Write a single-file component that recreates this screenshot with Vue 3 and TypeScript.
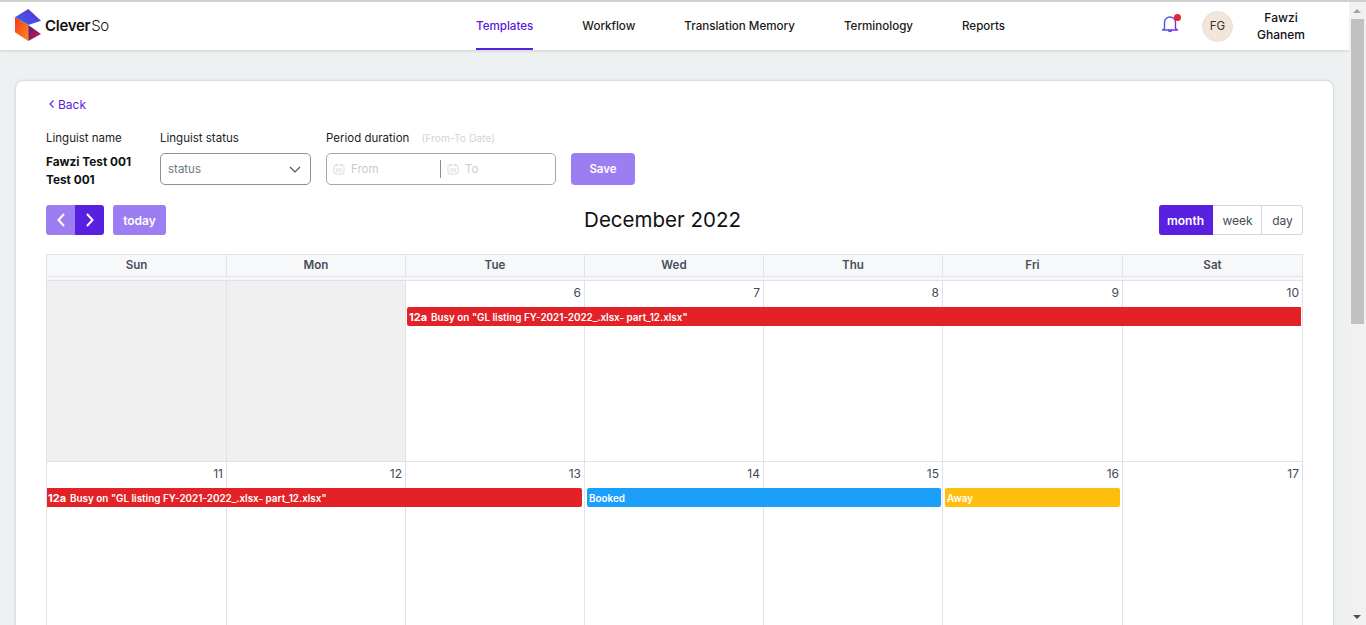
<script setup lang="ts">
interface Ev { label: string; time?: string; start: number; span: number; kind: string; contStart?: boolean; contEnd?: boolean }
interface Week { days: (number | null)[]; events: Ev[] }

const navItems = [
  { label: 'Templates', active: true },
  { label: 'Workflow', active: false },
  { label: 'Translation Memory', active: false },
  { label: 'Terminology', active: false },
  { label: 'Reports', active: false },
]
const dayNames = ['Sun', 'Mon', 'Tue', 'Wed', 'Thu', 'Fri', 'Sat']
const file = 'Busy on "GL listing FY-2021-2022_.xlsx- part_12.xlsx"'
const weeks: Week[] = [
  {
    days: [null, null, 6, 7, 8, 9, 10],
    events: [{ time: '12a', label: file, start: 3, span: 5, kind: 'busy', contEnd: true }],
  },
  {
    days: [11, 12, 13, 14, 15, 16, 17],
    events: [
      { time: '12a', label: file, start: 1, span: 3, kind: 'busy', contStart: true },
      { label: 'Booked', start: 4, span: 2, kind: 'booked' },
      { label: 'Away', start: 6, span: 1, kind: 'away' },
    ],
  },
]
function evStyle(e: Ev) {
  return { gridColumn: `${e.start} / span ${e.span}` }
}
</script>

<template>
  <div class="app">
    <div class="page">
      <header class="topbar">
        <div class="brand">
          <svg class="logo" viewBox="0 0 26 32" width="26" height="32">
            <defs>
              <linearGradient id="lgTop" x1="0" y1="1" x2="1" y2="0">
                <stop offset="0" stop-color="#2f6fe8" />
                <stop offset="1" stop-color="#6a1fd8" />
              </linearGradient>
              <linearGradient id="lgLeft" x1="0" y1="0" x2="1" y2="1">
                <stop offset="0" stop-color="#f2371f" />
                <stop offset="1" stop-color="#ff8a1c" />
              </linearGradient>
              <linearGradient id="lgRight" x1="0" y1="0" x2="1" y2="1">
                <stop offset="0" stop-color="#5a1a78" />
                <stop offset="1" stop-color="#d01c3c" />
              </linearGradient>
            </defs>
            <path d="M0 8.3 L13.3 0 L26 11.7 L13.3 16 Z" fill="url(#lgTop)" />
            <path d="M0 8.3 L13.3 16 L13.3 32 L0 23.3 Z" fill="url(#lgLeft)" />
            <path d="M13.3 16 L26 25 L13.3 32 Z" fill="url(#lgRight)" />
          </svg>
          <span class="brand-name"><b>Clever</b><span>So</span></span>
        </div>
        <nav class="nav">
          <a v-for="n in navItems" :key="n.label" class="nav-item" :class="{ active: n.active }">{{ n.label }}</a>
        </nav>
        <div class="user">
          <span class="bell">
            <svg viewBox="0 1.5 20 20" width="20" height="20" fill="none" stroke="url(#bellGrad)" stroke-width="1.4" stroke-linecap="round" stroke-linejoin="round">
              <defs>
                <linearGradient id="bellGrad" gradientUnits="userSpaceOnUse" x1="2" y1="0" x2="18" y2="0">
                  <stop offset="0" stop-color="#4a5cf0" />
                  <stop offset="1" stop-color="#8a24e0" />
                </linearGradient>
              </defs>
              <path d="M4.5 14 V7.5 a5.5 5 0 0 1 11 0 V14 l2 1.5 H2.5 Z" />
              <path d="M8.5 15.5 a1.5 1.5 0 0 0 3 0" />
            </svg>
            <i class="bell-dot"></i>
          </span>
          <span class="avatar">FG</span>
          <span class="user-name">Fawzi<br />Ghanem</span>
        </div>
      </header>

      <main class="content">
        <section class="card">
          <a class="back">
            <svg viewBox="0 0 6 10" width="6" height="10" fill="none" stroke="#5a20e0" stroke-width="1.1"><path d="M4.5 1.5 L1 5 L4.5 8.5" /></svg>
            Back
          </a>

          <div class="filters">
            <div class="f-name">
              <label>Linguist name</label>
              <div class="name-value">Fawzi Test 001 Test 001</div>
            </div>
            <div class="f-status">
              <label>Linguist status</label>
              <div class="select">
                <span>status</span>
                <svg viewBox="0 0 12 7" width="12" height="7" fill="none" stroke="#555" stroke-width="1.2"><path d="M1 1 L6 6 L11 1" /></svg>
              </div>
            </div>
            <div class="f-period">
              <label>Period duration <small>(From-To Date)</small></label>
              <div class="range">
                <div class="range-part from">
                  <svg viewBox="0 0 12 12" width="12" height="12" fill="none" stroke="#d5dadd" stroke-width="1"><rect x="1" y="2" width="10" height="9" rx="2" /><path d="M3.5 1 V3 M8.5 1 V3 M3 6 H9 M3 8 H9" /></svg>
                  <span>From</span>
                </div>
                <div class="range-part">
                  <svg viewBox="0 0 12 12" width="12" height="12" fill="none" stroke="#d5dadd" stroke-width="1"><rect x="1" y="2" width="10" height="9" rx="2" /><path d="M3.5 1 V3 M8.5 1 V3 M3 6 H9 M3 8 H9" /></svg>
                  <span>To</span>
                </div>
              </div>
            </div>
            <button class="save">Save</button>
          </div>

          <div class="toolbar">
            <div class="tb-left">
              <div class="btn-group">
                <button class="arrow light">
                  <svg viewBox="0 0 8 14" width="8" height="14" fill="none" stroke="#fff" stroke-width="2"><path d="M7 1 L1.5 7 L7 13" /></svg>
                </button>
                <button class="arrow dark">
                  <svg viewBox="0 0 8 14" width="8" height="14" fill="none" stroke="#fff" stroke-width="2"><path d="M1 1 L6.5 7 L1 13" /></svg>
                </button>
              </div>
              <button class="today">today</button>
            </div>
            <h2 class="title">December 2022</h2>
            <div class="views">
              <button class="view on">month</button>
              <button class="view wk">week</button>
              <button class="view dy">day</button>
            </div>
          </div>

          <div class="calendar">
            <div class="cal-head">
              <div v-for="d in dayNames" :key="d" class="head-cell">{{ d }}</div>
            </div>
            <div class="spacer"></div>
            <div v-for="(w, i) in weeks" :key="i" class="week">
              <div class="week-bg">
                <div v-for="(d, j) in w.days" :key="j" class="bg-cell" :class="{ off: d === null }"></div>
              </div>
              <div class="week-nums">
                <div v-for="(d, j) in w.days" :key="j" class="num">{{ d }}</div>
              </div>
              <div class="week-events">
                <div
                  v-for="e in w.events"
                  :key="e.start"
                  class="event"
                  :class="[e.kind, { 'cont-start': e.contStart, 'cont-end': e.contEnd }]"
                  :style="evStyle(e)"
                >
                  <b v-if="e.time">{{ e.time }}</b>
                  <span>{{ e.label }}</span>
                </div>
              </div>
            </div>
          </div>
        </section>
      </main>
    </div>

    <aside class="scrollbar">
      <i class="sb-up"></i>
      <div class="sb-thumb"></div>
      <i class="sb-down"></i>
    </aside>
  </div>
</template>

<style>
html, body { margin: 0; height: 100%; overflow: hidden; }
</style>

<style scoped>
* { box-sizing: border-box; }
.app {
  display: flex;
  width: 1366px;
  height: 625px;
  overflow: hidden;
  font-family: Inter, "Open Sans", sans-serif;
  color: #111;
  background: #eef1f2;
  border-top: 2px solid #cfcfcf;
}
.page { flex: 1; min-width: 0; }

.topbar {
  position: relative;
  height: 48px;
  background: #fff;
  box-shadow: 0 1px 3px rgba(0, 0, 0, .14);
  display: flex;
  align-items: stretch;
}
.brand { width: 476px; display: flex; align-items: center; padding: 0 0 2px 15px; gap: 4px; }
.brand-name { font-size: 15px; letter-spacing: -.3px; color: #111; }
.brand-name b { font-weight: 600; }
.brand-name span { font-weight: 300; margin-left: 1px; }
.nav { display: flex; gap: 49px; flex: 1; }
.nav-item {
  display: flex;
  align-items: center;
  height: 48px;
  padding-top: 2px;
  font-size: 11.6px;
  font-weight: 500;
  color: #1a1a1a;
  border-bottom: 2px solid transparent;
}
.nav-item.active { color: #5a20e0; border-bottom-color: #5a20e0; }
.user { display: flex; align-items: center; width: 189px; }
.bell { position: relative; width: 20px; height: 20px; }
.bell-dot {
  position: absolute; right: -1px; top: -2px;
  width: 7px; height: 7px; border-radius: 50%;
  background: #e0282e;
}
.avatar {
  width: 31px; height: 31px; margin-left: 22px;
  border-radius: 50%;
  background: #f2e6da;
  border: 1px solid #e6e2de;
  display: flex; align-items: center; justify-content: center;
  font-size: 11.5px; color: #333;
}
.user-name {
  width: 72px; margin-left: 12px;
  text-align: center;
  font-size: 12px; line-height: 17px; font-weight: 500; color: #111;
}

.content { padding: 31px 16px 0; }
.card {
  background: #fff;
  border-radius: 7px 7px 0 0;
  box-shadow: 0 0 3px rgba(0, 0, 0, .22);
  padding: 15px 30px 0;
  height: 560px;
  overflow: hidden;
}
.back {
  display: flex; align-items: center; gap: 3px;
  margin-left: 3px;
  height: 16px;
  font-size: 12px; color: #5a20e0;
}
.filters { display: flex; margin-top: 18px; height: 64px; }
label {
  display: block;
  height: 16px;
  font-size: 11.5px; line-height: 16px; color: #222;
}
label small { font-size: 10.3px; color: #d4d4d4; margin-left: 9px; }
.f-name { width: 114px; }
.name-value {
  width: 96px;
  margin-top: 7px;
  font-size: 11.8px; font-weight: 700; line-height: 18px; color: #111;
}
.f-status { width: 166px; }
.select {
  margin-top: 7px;
  width: 151px; height: 32px;
  border: 1px solid #8f8f8f; border-radius: 5px;
  display: flex; align-items: center; justify-content: space-between;
  padding: 0 9px 0 7px;
  font-size: 11.5px; color: #6d7780;
}
.f-period { width: 245px; }
.range {
  margin-top: 7px;
  width: 230px; height: 32px;
  border: 1px solid #a8a8a8; border-radius: 5px;
  display: flex; align-items: center;
}
.range-part {
  display: flex; align-items: center; gap: 6px;
  padding-left: 6px;
  height: 18px;
  font-size: 11.5px; color: #c6ccd2;
}
.range-part.from { width: 114px; border-right: 1px solid #8f8f8f; }
.save {
  margin-top: 23px;
  width: 64px; height: 32px;
  border: 0; border-radius: 4px;
  background: #9d7ef2;
  color: #fff;
  font: 600 11.5px Inter, sans-serif;
}

.toolbar {
  display: flex;
  justify-content: space-between;
  align-items: center;
  height: 30px;
  margin-top: 11px;
}
.tb-left { display: flex; gap: 9px; }
.btn-group { display: flex; }
button { cursor: pointer; }
.arrow {
  width: 29px; height: 30px; padding: 0; border: 0;
  display: flex; align-items: center; justify-content: center;
}
.arrow.light { background: #9d7ef2; border-radius: 3px 0 0 3px; }
.arrow.dark { background: #5a20e0; border-radius: 0 3px 3px 0; }
.today {
  width: 53px; height: 30px; border: 0; border-radius: 3px; padding: 0;
  background: #9d7ef2; color: #fff;
  font: 600 12px Inter, sans-serif;
}
.title { margin: 0 0 2px; font-size: 20.5px; font-weight: 400; color: #111; }
.views { display: flex; height: 30px; }
.view {
  height: 30px; padding: 0;
  border: 1px solid #d5d8de; border-left: 0;
  background: #fff; color: #444c58;
  font: 400 12px Inter, sans-serif;
}
.view.on {
  width: 54px;
  background: #5a20e0; color: #fff; border-color: #5a20e0;
  border-radius: 3px 0 0 3px; font-weight: 600;
}
.view.wk { width: 49px; padding-left: 1px; }
.view.dy { width: 41px; padding-left: 1px; border-radius: 0 3px 3px 0; }

.calendar {
  --cols: 180px 179px 179px 179px 179px 180px 180px;
  width: 1257px; margin-top: 19px;
  border-right: 1px solid #dfe2e8;
}
.cal-head {
  display: grid; grid-template-columns: var(--cols);
  height: 23px;
  background: #f7f8fa;
  border-top: 1px solid #dfe2e8;
  border-bottom: 1px solid #dfe2e8;
}
.head-cell {
  display: flex; align-items: center; justify-content: center;
  padding-bottom: 2px;
  font-size: 11.6px; font-weight: 600; color: #474f5b;
  border-left: 1px solid #dfe2e8;
}
.spacer { height: 4px; background: #f7f8fa; border-left: 1px solid #dfe2e8; border-bottom: 1px solid #dfe2e8; }
.week {
  position: relative;
  height: 181px;
  border-bottom: 1px solid #dfe2e8;
}
.week-bg {
  position: absolute; inset: 0;
  display: grid; grid-template-columns: var(--cols);
}
.bg-cell { border-left: 1px solid #dfe2e8; }
.bg-cell.off { background: #f0f0f0; }
.week-nums, .week-events {
  position: relative;
  display: grid; grid-template-columns: var(--cols);
}
.week-nums { height: 26px; }
.num {
  text-align: right; padding: 3px 3px 0 0;
  font-size: 12px; line-height: 17px; color: #3f4a59;
}
.event {
  height: 19px;
  margin: 0 2px 0 3px;
  padding-left: 2px;
  display: flex; align-items: center; gap: 4px;
  border-radius: 2px;
  color: #fff;
  font-size: 9.9px; font-weight: 600;
  white-space: nowrap; overflow: hidden;
}
.event b { font-weight: 700; font-size: 11px; }
.event.cont-start { margin: 0 2px 0 1px; padding-left: 1px; border-radius: 0 2px 2px 0; }
.event.cont-end { margin: 0 1px 0 2px; border-radius: 2px 0 0 2px; }
.busy { background: #e32227; }
.booked { background: #1b9ffb; margin-right: 1px; }
.away { background: #ffbd0d; }

.scrollbar {
  position: relative;
  width: 17px; flex: none;
  margin-top: -2px;
  background: #f1f1f1;
}
.sb-thumb { position: absolute; left: 2px; width: 13px; top: 19px; height: 305px; background: #c1c1c1; }
.sb-up, .sb-down {
  position: absolute; left: 4px;
  width: 0; height: 0;
  border-left: 4px solid transparent; border-right: 4px solid transparent;
}
.sb-up { top: 9px; border-bottom: 4px solid #a3a3a3; }
.sb-down { bottom: 6px; border-top: 4px solid #505050; }
</style>
